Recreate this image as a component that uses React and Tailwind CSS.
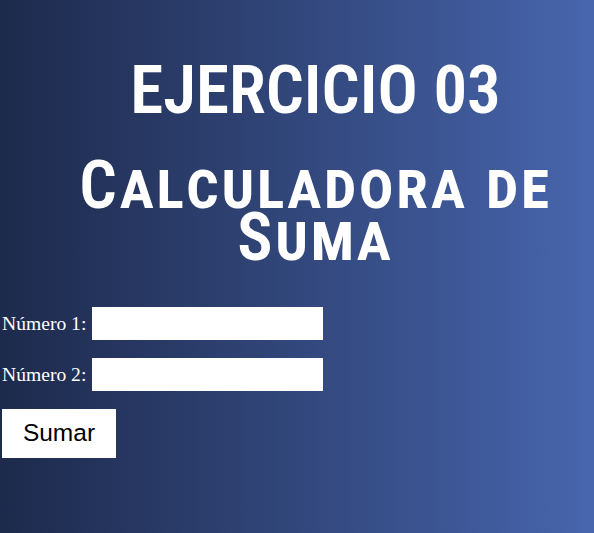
import React from 'react';

const Field = ({ label }) => (
  <div className="flex items-center h-[33px]">
    <label className="text-white text-[19.6px] pl-[2px] font-['Liberation_Serif',serif] w-[92px]">{label}</label>
    <input type="text" className="bg-white w-[231px] h-[33px] outline-none border-0" />
  </div>
);

export default function App() {
  return (
    <div className="min-h-screen w-full bg-gradient-to-r from-[#1d2a4c] to-[#4866ae] overflow-hidden">
      <div className="pl-[37px] text-center text-white font-['Roboto','Open_Sans',sans-serif] [font-stretch:75%]">
        <h1 className="pt-[50px] text-[67px] leading-[80px] font-semibold">EJERCICIO 03</h1>
        <h2 className="mt-[30px] text-[66px] leading-[52px] font-semibold [font-variant:small-caps] tracking-[2.8px]">
          Calculadora de<br />Suma
        </h2>
      </div>
      <form className="mt-[43px] flex flex-col gap-[18px]" onSubmit={(e) => e.preventDefault()}>
        <Field label="Número 1:" />
        <Field label="Número 2:" />
        <div className="pl-[2px]">
          <button type="submit" className="bg-white text-black w-[114px] h-[49px] text-[24.5px] font-['Liberation_Sans',sans-serif]">
            Sumar
          </button>
        </div>
      </form>
    </div>
  );
}
